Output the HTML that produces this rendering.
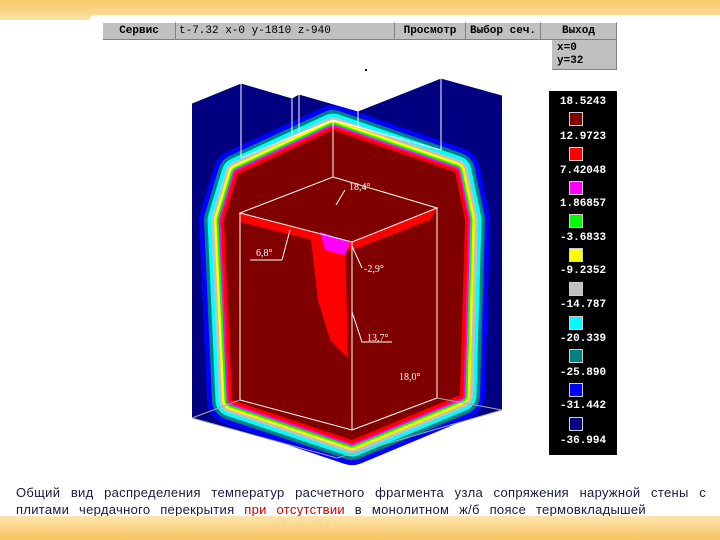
<!DOCTYPE html>
<html><head><meta charset="utf-8"><style>
body{margin:0;width:720px;height:540px;position:relative;background:#fff;overflow:hidden;font-family:"Liberation Mono",monospace}
.topband{position:absolute;left:0;top:0;width:720px;height:20px;background:linear-gradient(#f6c766,#fbe2a8)}
.notch{position:absolute;left:90px;top:15px;width:630px;height:6px;background:#fff;border-radius:4px 0 0 0}
.botband{position:absolute;left:0;top:516px;width:720px;height:24px;background:linear-gradient(#fde5b0,#f7c45c)}
.menu{position:absolute;top:22px;height:18px;background:#c0c0c0;border-top:1px solid #fff;border-bottom:1px solid #808080;box-sizing:border-box;font-size:11px;font-weight:bold;line-height:16px;color:#000;border-right:1px solid #808080;text-align:center}
.legend{position:absolute;left:549px;top:91px;width:68px;height:364px;background:#000}
.lt{position:absolute;left:0;width:68px;text-align:center;color:#fff;font-weight:bold;font-size:11px}
.sq{position:absolute;left:20px;width:14px;height:14px;border:1px solid #ccc;box-sizing:border-box}
.cap{position:absolute;left:16px;font-family:"Liberation Sans",sans-serif;font-size:13px;color:#1a1a40;line-height:18px;white-space:nowrap;text-align:justify;text-align-last:justify}
</style></head><body>
<div class="topband"></div><div class="notch"></div>
<div class="menu" style="left:103px;width:73px">Сервис</div>
<div class="menu" style="left:176px;width:219px;text-align:left;padding-left:3px;font-weight:normal">t-7.32 x-0 y-1810 z-940</div>
<div class="menu" style="left:395px;width:71px">Просмотр</div>
<div class="menu" style="left:466px;width:75px">Выбор сеч.</div>
<div class="menu" style="left:541px;width:76px">Выход</div>
<div style="position:absolute;left:552px;top:40px;width:65px;height:30px;background:#c0c0c0;border-right:1px solid #808080;border-bottom:1px solid #808080;box-sizing:border-box;font-size:11px;font-weight:bold;line-height:13px;padding:2px 0 0 5px">x=0<br>y=32</div>
<div style="position:absolute;left:365px;top:69px;width:2px;height:2px;background:#000"></div>
<svg style="position:absolute;left:0;top:0" width="720" height="540">
<polygon points="192,103 241,83 292,98 299,94 358,111 441,78 502,95 502,410 337,458 192,418" fill="#000080"/>
<g fill="none" stroke-linejoin="round">
<path d="M333,130 L455,172 L465,220 L460,395 L352,440 L232,400 L224,220 L238,174 Z" stroke="#0000ff" stroke-width="50"/>
<path d="M333,130 L455,172 L465,220 L460,395 L352,440 L232,400 L224,220 L238,174 Z" stroke="#008080" stroke-width="40"/>
<path d="M333,130 L455,172 L465,220 L460,395 L352,440 L232,400 L224,220 L238,174 Z" stroke="#00ffff" stroke-width="33"/>
<path d="M333,130 L455,172 L465,220 L460,395 L352,440 L232,400 L224,220 L238,174 Z" stroke="#c0c0c0" stroke-width="26"/>
<path d="M333,130 L455,172 L465,220 L460,395 L352,440 L232,400 L224,220 L238,174 Z" stroke="#ffff00" stroke-width="20"/>
<path d="M333,130 L455,172 L465,220 L460,395 L352,440 L232,400 L224,220 L238,174 Z" stroke="#00ff00" stroke-width="15"/>
<path d="M333,130 L455,172 L465,220 L460,395 L352,440 L232,400 L224,220 L238,174 Z" stroke="#ff00ff" stroke-width="11"/>
<path d="M333,130 L455,172 L465,220 L460,395 L352,440 L232,400 L224,220 L238,174 Z" stroke="#ff0000" stroke-width="7"/>
</g>
<path d="M333,130 L455,172 L465,220 L460,395 L352,440 L232,400 L224,220 L238,174 Z" fill="#800000"/>
<polygon points="240,213 352,242 437,208 430,220 352,250 240,222" fill="#ff0000"/>
<polygon points="310,232 345,242 348,358 330,340 318,300" fill="#ff0000"/>
<polygon points="320,232 350,242 345,255 325,250" fill="#ff00ff"/>
<g stroke="#fff" stroke-width="1" fill="none">
<polyline points="192,103 241,83 292,98 299,94 358,111 441,78 502,95"/>
<line x1="241" y1="83" x2="241" y2="158"/><line x1="292" y1="98" x2="292" y2="135"/><line x1="299" y1="94" x2="299" y2="132"/>
<line x1="358" y1="111" x2="358" y2="128"/><line x1="441" y1="78" x2="441" y2="150"/>
<line x1="241" y1="158" x2="333" y2="120"/><line x1="333" y1="120" x2="441" y2="150"/>
<line x1="333" y1="120" x2="333" y2="177"/>
<polygon points="333,177 437,208 352,242 240,213"/>
<line x1="240" y1="213" x2="240" y2="400"/><line x1="352" y1="242" x2="352" y2="430"/><line x1="437" y1="208" x2="437" y2="398"/>
<polyline points="240,400 352,430 437,398"/>
<polyline points="192,418 337,458 502,410" stroke="#aaa"/>
<line x1="192" y1="418" x2="240" y2="400" stroke="#aaa"/><line x1="502" y1="410" x2="437" y2="398" stroke="#aaa"/>
<line x1="336" y1="205" x2="345" y2="190"/><line x1="290" y1="230" x2="282" y2="260"/><polyline points="250,260 282,260"/>
<line x1="352" y1="246" x2="362" y2="268"/><polyline points="352,312 362,342 392,342"/>
</g>
<g fill="#fff" font-family="Liberation Serif,serif" font-size="10">
<text x="349" y="190">18,4°</text><text x="256" y="256">6,8°</text><text x="364" y="272">-2,9°</text><text x="367" y="341">13,7°</text><text x="399" y="380">18,0°</text>
</g>
</svg>
<div class="legend">
<div class="lt" style="top:5px">18.5243</div><div class="sq" style="top:21px;background:#800000"></div>
<div class="lt" style="top:40px">12.9723</div><div class="sq" style="top:56px;background:#ff0000"></div>
<div class="lt" style="top:74px">7.42048</div><div class="sq" style="top:90px;background:#ff00ff"></div>
<div class="lt" style="top:107px">1.86857</div><div class="sq" style="top:123px;background:#00ff00"></div>
<div class="lt" style="top:141px">-3.6833</div><div class="sq" style="top:157px;background:#ffff00"></div>
<div class="lt" style="top:174px">-9.2352</div><div class="sq" style="top:191px;background:#c0c0c0"></div>
<div class="lt" style="top:208px">-14.787</div><div class="sq" style="top:225px;background:#00ffff"></div>
<div class="lt" style="top:242px">-20.339</div><div class="sq" style="top:258px;background:#008080"></div>
<div class="lt" style="top:276px">-25.890</div><div class="sq" style="top:292px;background:#0000ff"></div>
<div class="lt" style="top:309px">-31.442</div><div class="sq" style="top:326px;background:#000080"></div>
<div class="lt" style="top:344px">-36.994</div>
</div>
<div class="cap" style="top:484px;width:690px;letter-spacing:0.3px">Общий вид распределения температур расчетного фрагмента узла сопряжения наружной стены с</div>
<div class="cap" style="top:501px;width:630px;letter-spacing:0.3px">плитами чердачного перекрытия <span style="color:#d00000">при отсутствии</span> в монолитном ж/б поясе термовкладышей</div>
<div class="botband"></div>
</body></html>
